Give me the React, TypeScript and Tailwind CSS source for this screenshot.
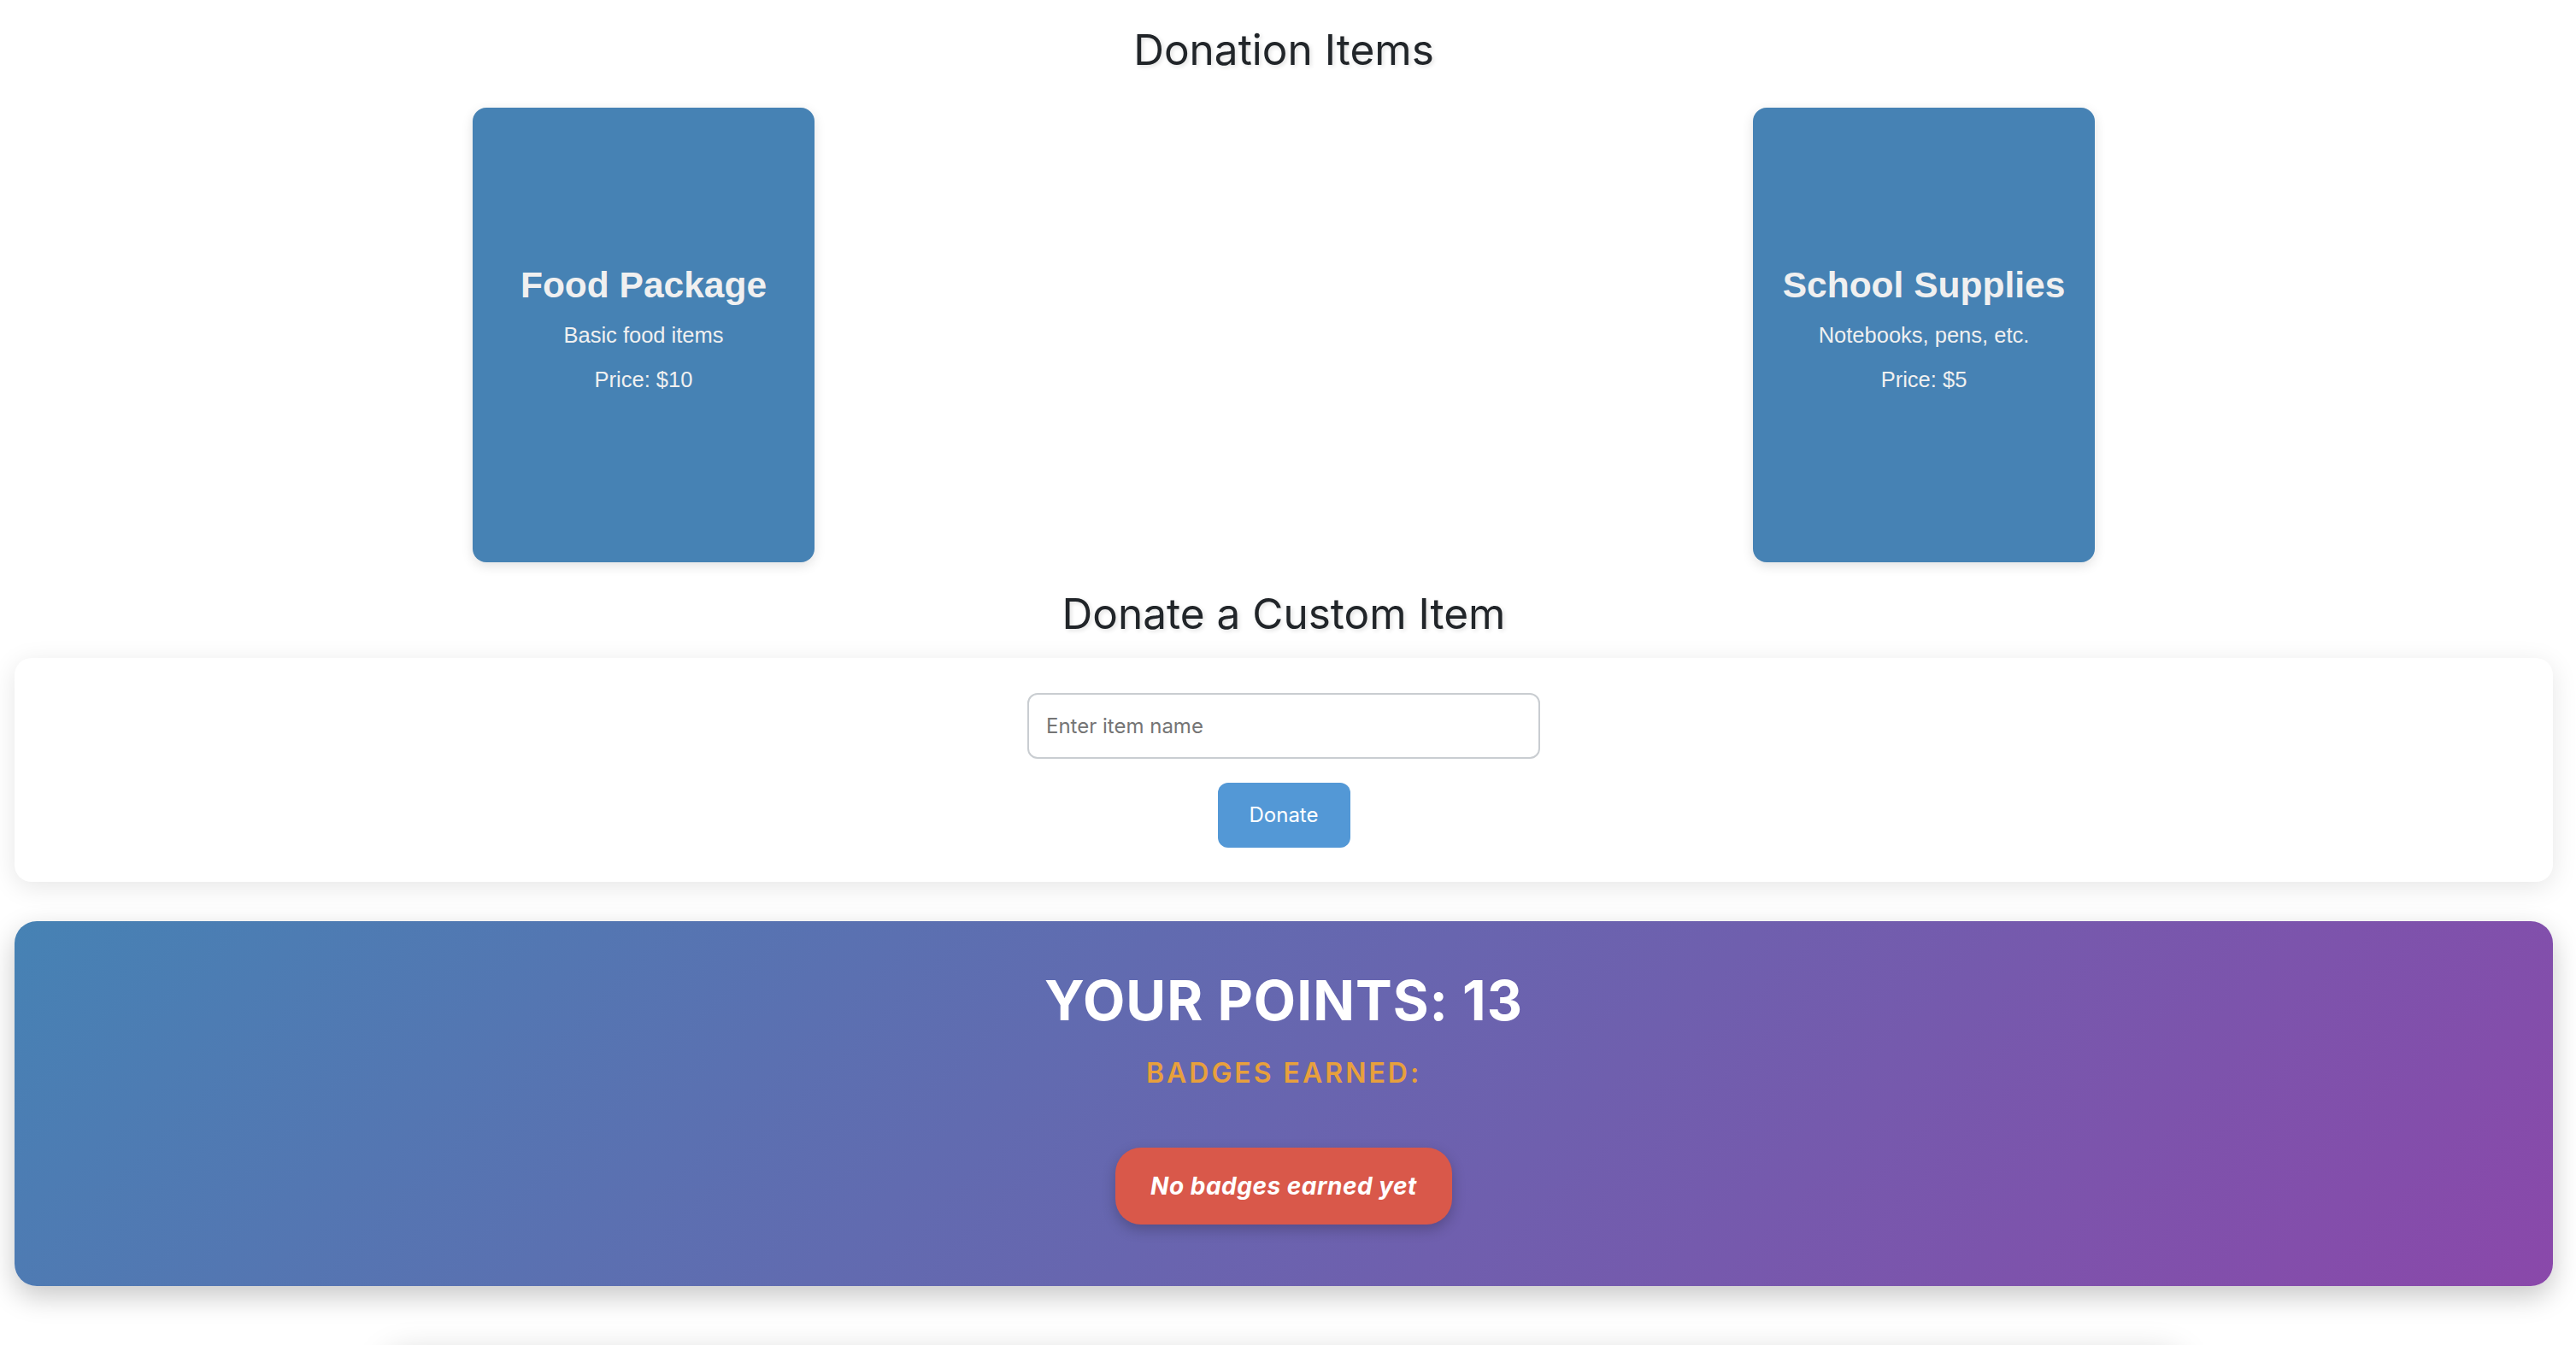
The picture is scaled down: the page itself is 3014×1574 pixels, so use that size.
import React from "react";

const items = [
  { name: "Food Package", desc: "Basic food items", price: 10 },
  { name: "School Supplies", desc: "Notebooks, pens, etc.", price: 5 },
];

function ItemCard({ name, desc, price }: { name: string; desc: string; price: number }) {
  return (
    <div className="w-[400px] h-[532px] bg-[#4682b4] rounded-[16px] shadow-[0_4px_14px_rgba(0,0,0,0.12)] flex flex-col items-center justify-center pb-[15px] text-[#f0f0f0] font-['Liberation_Sans',Arial,sans-serif] text-center">
      <h3 className="text-[42.5px] leading-[48px] font-bold">{name}</h3>
      <p className="mt-[20px] text-[25.5px] leading-[29px]">{desc}</p>
      <p className="mt-[23px] text-[25.5px] leading-[29px]">Price: ${price}</p>
    </div>
  );
}

export default function App() {
  const points = 13;
  const badges: string[] = [];

  return (
    <div className="h-[1574px] overflow-hidden bg-white font-['Inter',sans-serif]">
      <div className="pl-[17px] pr-[27px] pt-[29px]">
        <h2 className="text-center text-[49.5px] leading-[58px] text-[#212529] [text-shadow:2px_2px_5px_rgba(0,0,0,0.12)]">Donation Items</h2>

        <div className="mt-[39px] flex justify-between px-[536px]">
          {items.map((it) => (
            <ItemCard key={it.name} {...it} />
          ))}
        </div>

        <h2 className="mt-[31px] text-center text-[49.5px] leading-[58px] text-[#212529] [text-shadow:2px_2px_5px_rgba(0,0,0,0.12)]">Donate a Custom Item</h2>

        <div className="mt-[23px] bg-white rounded-[20px] shadow-[0_6px_30px_rgba(0,0,0,0.1)] pt-[41px] pb-[40px] flex flex-col items-center">
          <input
            type="text"
            placeholder="Enter item name"
            className="w-[600px] h-[77px] px-[20px] border-2 border-[#c9cdd1] rounded-[12px] text-[24px] text-[#333] placeholder:text-[#757575] outline-none"
          />
          <button className="mt-[28px] h-[76px] w-[155px] bg-[#5398d6] text-white text-[24px] rounded-[12px]">Donate</button>
        </div>

        <div className="mt-[46px] h-[427px] rounded-[26px] bg-[linear-gradient(135deg,#4682b4,#8a48aa)] shadow-[0_12px_32px_rgba(0,0,0,0.22)] flex flex-col items-center pt-[54px]">
          <h2 className="text-white font-bold text-[64px] leading-[78px] tracking-[1px]">YOUR POINTS: {points}</h2>
          <h3 className="mt-[26px] text-[#e8a03c] font-semibold text-[32px] leading-[39px] tracking-[3px]">BADGES EARNED:</h3>
          <div className="mt-[68px] flex gap-4">
            {badges.length === 0 ? (
              <span className="h-[90px] px-[41px] flex items-center rounded-[30px] bg-[#d9584a] text-white italic font-bold text-[28px] tracking-[0.5px] shadow-[0_6px_16px_rgba(0,0,0,0.22)]">No badges earned yet</span>
            ) : (
              badges.map((b) => <span key={b}>{b}</span>)
            )}
          </div>
        </div>

        <div className="mx-auto mt-[80px] w-[2100px] h-[300px] bg-white rounded-[20px] shadow-[0_0_40px_rgba(0,0,0,0.18)]"></div>
      </div>
    </div>
  );
}
